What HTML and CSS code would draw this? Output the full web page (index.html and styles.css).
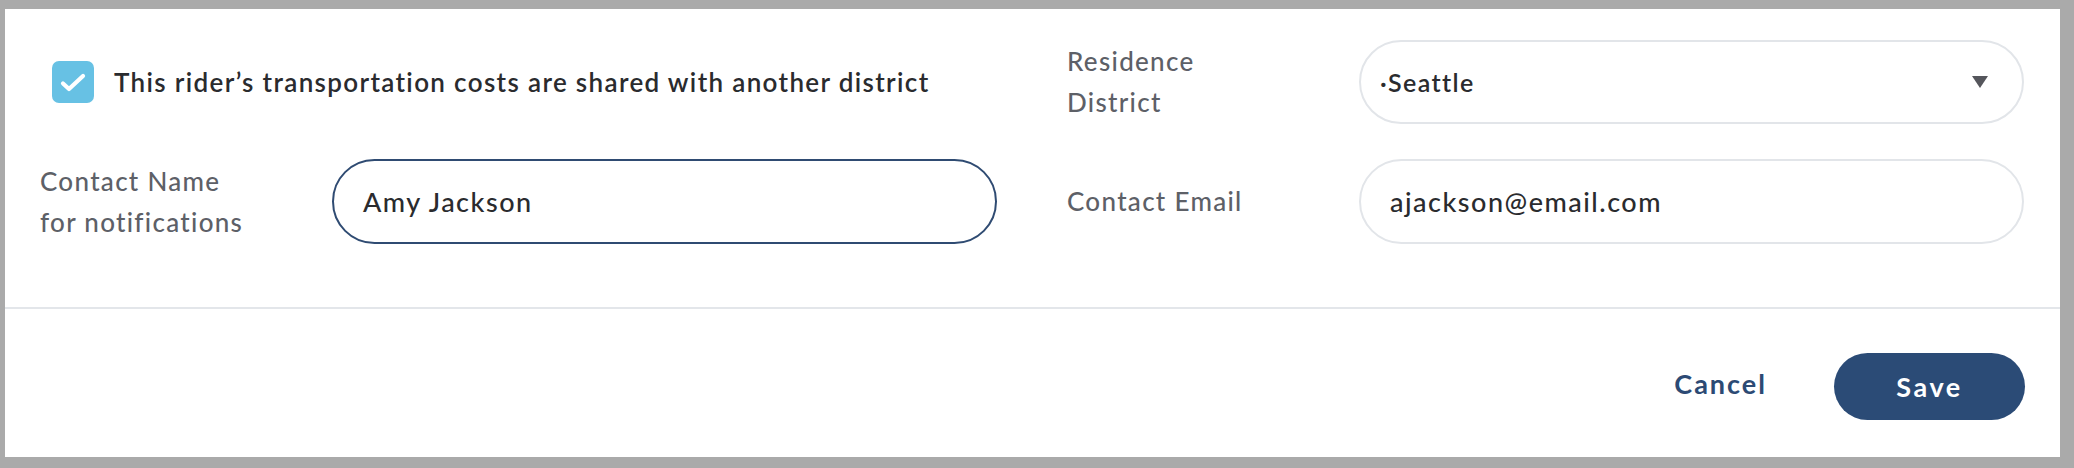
FILE: index.html
```html
<!DOCTYPE html>
<html lang="en">
<head>
<meta charset="utf-8">
<title>Rider contact</title>
<link rel="stylesheet" href="styles.css">
</head>
<body>
<div class="panel">
  <div class="form">
    <div class="half">
      <label class="check-row">
        <span class="checkbox">
          <svg width="42" height="42" viewBox="0 0 42 42"><path d="M11 22.5 L17 28 L31 15" fill="none" stroke="#fff" stroke-width="4.2" stroke-linecap="round" stroke-linejoin="round"/></svg>
        </span>
        <span class="check-text">This rider’s transportation costs are shared with another district</span>
      </label>
    </div>
    <div class="half">
      <div class="label">Residence<br>District</div>
      <div class="field select">
        <span class="value">·Seattle</span>
        <span class="caret"></span>
      </div>
    </div>
    <div class="half">
      <div class="label">Contact Name<br>for notifications</div>
      <div class="field active"><span class="value">Amy Jackson</span></div>
    </div>
    <div class="half">
      <div class="label">Contact Email</div>
      <div class="field"><span class="value">ajackson@email.com</span></div>
    </div>
  </div>
  <div class="footer">
    <button class="btn-cancel">Cancel</button>
    <button class="btn-save">Save</button>
  </div>
</div>
</body>
</html>
```
FILE: styles.css
```css
html, body {
  margin: 0;
  padding: 0;
}
body {
  background: #aaaaaa;
  padding: 9px 14px 11px 5px;
  font-family: "Lato", "Liberation Sans", sans-serif;
  width: 2074px;
  height: 468px;
  box-sizing: border-box;
}
.panel {
  background: #ffffff;
  height: 448px;
  display: flex;
  flex-direction: column;
}
.form {
  display: grid;
  grid-template-columns: 957px 957px;
  column-gap: 70px;
  row-gap: 35px;
  grid-template-rows: 84px 85px;
  padding: 31px 36px 0 35px;
  height: 300px;
  box-sizing: border-box;
  border-bottom: 2px solid #e3e6ea;
}
.half {
  display: flex;
  align-items: center;
}
.check-row {
  display: flex;
  align-items: center;
  padding-left: 12px;
  gap: 20px;
}
.checkbox {
  width: 42px;
  height: 42px;
  border-radius: 7px;
  background: #67c1e4;
  display: flex;
}
.check-text {
  font-size: 26px;
  font-weight: 600;
  color: #2a2b2e;
  letter-spacing: 1.35px;
}
.label {
  width: 292px;
  flex: none;
  font-size: 26px;
  line-height: 41px;
  color: #5d6067;
  font-weight: 500;
  letter-spacing: 1.3px;
}
.field {
  flex: 1;
  height: 100%;
  box-sizing: border-box;
  border: 2px solid #e2e5e9;
  border-radius: 44px;
  display: flex;
  align-items: center;
  padding: 0 40px 0 29px;
}
.field.active {
  border-color: #2f4b72;
}
.value {
  font-size: 27px;
  font-weight: 500;
  color: #2a2b2e;
  letter-spacing: 1.5px;
}
.select {
  padding-left: 19px;
  justify-content: space-between;
}
.select .value {
  font-size: 25px;
  font-weight: 600;
  letter-spacing: 1.4px;
}
.caret {
  width: 0;
  height: 0;
  border-left: 8.5px solid transparent;
  border-right: 8.5px solid transparent;
  border-top: 12px solid #55565c;
  margin-right: -6px;
}
.footer {
  flex: 1;
  display: flex;
  justify-content: flex-end;
  align-items: center;
  padding: 0 35px 0 0;
  gap: 67px;
}
button {
  font-family: inherit;
  font-size: 27px;
  font-weight: 700;
  border: none;
  cursor: pointer;
  letter-spacing: 2px;
}
.btn-cancel {
  background: none;
  color: #2c4a74;
  padding: 0;
}
.btn-save {
  background: #2b4b76;
  color: #ffffff;
  width: 191px;
  height: 67px;
  border-radius: 34px;
  margin-top: 6px;
  letter-spacing: 2.6px;
}
```
